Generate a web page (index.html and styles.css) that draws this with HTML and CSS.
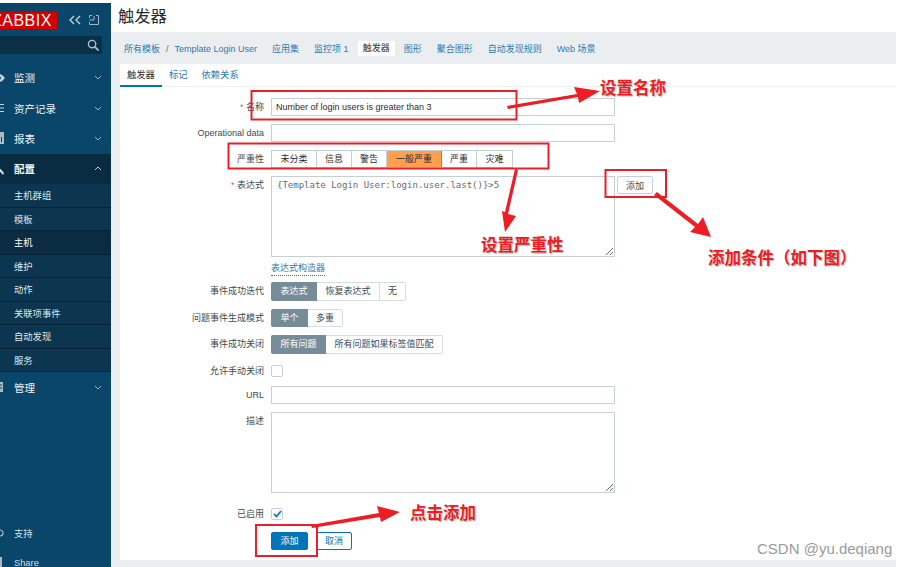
FILE: index.html
```html
<!DOCTYPE html>
<html lang="en">
<head>
  <meta charset="UTF-8">
  <meta name="viewport" content="width=device-width, initial-scale=1.0">
  <title>触发器</title>
  <link rel="stylesheet" href="styles.css">
</head>
<body>
  <div class="page">
    <aside class="sidebar">
      <div class="brand">
        <div class="logo">ZABBIX</div>
        <svg class="brand-icon" width="12" height="10" viewBox="0 0 12 10"><path d="M5 1 1 5l4 4M11 1 7 5l4 4" fill="none" stroke="#c9d6df" stroke-width="1.3"/></svg>
        <svg class="brand-icon" width="10" height="10" viewBox="0 0 10 10"><path d="M.5 3V.5H3M7 .5h2.500v9H.5V7M.5 5h4.500V1" fill="none" stroke="#9fb4c2"/></svg>
      </div>
      <div class="search">
        <svg width="12" height="12" viewBox="0 0 13 13"><circle cx="5.500" cy="5.500" r="4" fill="none" stroke="#b5c4ce" stroke-width="1.400"/><path d="m8.500 8.500 4 4" stroke="#b5c4ce" stroke-width="1.800"/></svg>
      </div>
      <nav class="menu">
        <div class="menu-item">
          <svg class="menu-icon" width="14" height="14" viewBox="0 0 14 14"><path d="M-6 7q3-4 5.500-4T5 7q-3 4-5.500 4T-6 7Z" fill="#c5d2da"/><circle cx="-.5" cy="7" r="1.500" fill="#0a466a"/></svg>
          <span>监测</span>
          <svg class="chevron" width="8" height="5" viewBox="0 0 8 5"><path d="m1 1 3 3 3-3" fill="none" stroke="#9fb4c2"/></svg>
        </div>
        <div class="menu-item">
          <svg class="menu-icon" width="14" height="14" viewBox="0 0 14 14"><path d="M0 3.500h4M0 7h4M0 10.500h4" stroke="#c5d2da" stroke-width="1.200"/></svg>
          <span>资产记录</span>
          <svg class="chevron" width="8" height="5" viewBox="0 0 8 5"><path d="m1 1 3 3 3-3" fill="none" stroke="#9fb4c2"/></svg>
        </div>
        <div class="menu-item">
          <svg class="menu-icon" width="14" height="14" viewBox="0 0 14 14"><path d="M0 1h4v12H0z" fill="#a9bbc7"/><path d="M1 6h1v5H1z" fill="#0a466a"/></svg>
          <span>报表</span>
          <svg class="chevron" width="8" height="5" viewBox="0 0 8 5"><path d="m1 1 3 3 3-3" fill="none" stroke="#9fb4c2"/></svg>
        </div>
        <div class="menu-item menu-item-open">
          <svg class="menu-icon" width="14" height="14" viewBox="0 0 14 14"><path d="m-1 5 5 6-1 2-5-6z" fill="#d5dfe5"/></svg>
          <span>配置</span>
          <svg class="chevron" width="8" height="5" viewBox="0 0 8 5"><path d="m1 4 3-3 3 3" fill="none" stroke="#c5d2da"/></svg>
        </div>
        <ul class="submenu">
          <li>主机群组</li>
          <li>模板</li>
          <li class="submenu-current">主机</li>
          <li>维护</li>
          <li>动作</li>
          <li>关联项事件</li>
          <li>自动发现</li>
          <li>服务</li>
        </ul>
        <div class="menu-item">
          <svg class="menu-icon" width="14" height="14" viewBox="0 0 14 14"><path d="M0 2h3v10H0z" fill="#a9bbc7"/><path d="M0 5h2M0 8h2" stroke="#0a466a"/></svg>
          <span>管理</span>
          <svg class="chevron" width="8" height="5" viewBox="0 0 8 5"><path d="m1 1 3 3 3-3" fill="none" stroke="#9fb4c2"/></svg>
        </div>
      </nav>
      <div class="sidebar-foot">
        <div class="foot-item">
          <svg class="menu-icon" width="14" height="14" viewBox="0 0 14 14"><circle cx="0" cy="7" r="3" fill="none" stroke="#a9bbc7" stroke-width="1.200"/></svg>
          <span>支持</span>
        </div>
        <div class="foot-item">
          <svg class="menu-icon" width="14" height="14" viewBox="0 0 14 14"><path d="M0 1h2v12H0z" fill="#a9bbc7"/></svg>
          <span>Share</span>
        </div>
      </div>
    </aside>

    <main class="main">
      <header class="header"><h1>触发器</h1></header>
      <div class="crumbs">
        <a>所有模板</a>
        <span class="crumb-sep">/</span>
        <a class="crumb-wide">Template Login User</a>
        <a>应用集</a>
        <a>监控项 <span class="count">1</span></a>
        <a class="crumb-current">触发器</a>
        <a>图形</a>
        <a>聚合图形</a>
        <a>自动发现规则</a>
        <a>Web 场景</a>
      </div>

      <section class="card">
        <div class="tabs">
          <a class="tab tab-current">触发器</a>
          <a class="tab">标记</a>
          <a class="tab">依赖关系</a>
        </div>

        <form class="form">
          <div class="row">
            <label class="label"><i>*</i> 名称</label>
            <input class="field" type="text" value="Number of login users is greater than 3">
          </div>
          <div class="row">
            <label class="label">Operational data</label>
            <input class="field" type="text">
          </div>
          <div class="row">
            <label class="label">严重性</label>
            <div class="severity">
              <span class="sev-1">未分类</span>
              <span class="sev-2">信息</span>
              <span class="sev-2">警告</span>
              <span class="sev-3 sev-on">一般严重</span>
              <span class="sev-2">严重</span>
              <span class="sev-2">灾难</span>
            </div>
          </div>
          <div class="row row-expr">
            <label class="label"><i>*</i> 表达式</label>
            <textarea class="field field-area field-mono">{Template Login User:login.user.last()}&gt;5</textarea>
            <button class="btn-plain" type="button">添加</button>
          </div>
          <div class="row row-link">
            <span class="label"></span>
            <a class="dotted">表达式构造器</a>
          </div>
          <div class="row">
            <label class="label">事件成功迭代</label>
            <div class="radio">
              <span class="radio-on w46">表达式</span><span class="w63">恢复表达式</span><span class="w26">无</span>
            </div>
          </div>
          <div class="row">
            <label class="label">问题事件生成模式</label>
            <div class="radio">
              <span class="radio-on w37">单个</span><span class="w35">多重</span>
            </div>
          </div>
          <div class="row">
            <label class="label">事件成功关闭</label>
            <div class="radio">
              <span class="radio-on w55">所有问题</span><span class="w117">所有问题如果标签值匹配</span>
            </div>
          </div>
          <div class="row row-check">
            <label class="label">允许手动关闭</label>
            <span class="check"></span>
          </div>
          <div class="row">
            <label class="label">URL</label>
            <input class="field" type="text">
          </div>
          <div class="row row-desc">
            <label class="label">描述</label>
            <textarea class="field field-area"></textarea>
          </div>
          <div class="row row-enabled">
            <label class="label">已启用</label>
            <span class="check">
              <svg width="9" height="8" viewBox="0 0 9 8"><path d="m1 4 2.500 2.500L8 1" fill="none" stroke="#0275b8" stroke-width="1.700"/></svg>
            </span>
          </div>
          <div class="row row-actions">
            <span class="label"></span>
            <button class="btn-primary" type="button">添加</button>
            <button class="btn-outline" type="button">取消</button>
          </div>
        </form>
      </section>
    </main>

    <!-- red notes drawn on top of the screenshot -->
    <svg class="marks" width="909" height="567" viewBox="0 0 909 567">
      <g fill="none" stroke="#e8202a" stroke-width="2">
        <rect x="251.500" y="91" width="265" height="28.500"/>
        <rect x="228.500" y="143.500" width="320" height="25"/>
        <rect x="605.500" y="170" width="60.500" height="27"/>
        <rect x="256" y="525" width="61" height="31"/>
      </g>
      <g fill="#ee1c25">
        <path d="M507 106 577 94 574 87 600 91 579 103 578 97 508 109Z"/>
        <path d="M515 169 518 170 508 214 516 216 505 232 502 211 505 212Z"/>
        <path d="M654 195 657 192 698 224 703 217 711 237 690 232 695 227Z"/>
        <path d="M311 525 379 513 377 506 400 512 381 522 380 517 312 528Z"/>
      </g>
    </svg>
    <div class="note note-name">设置名称</div>
    <div class="note note-severity">设置严重性</div>
    <div class="note note-cond">添加条件（如下图）</div>
    <div class="note note-submit">点击添加</div>
    <div class="watermark">CSDN @yu.deqiang</div>
  </div>
</body>
</html>
```

FILE: styles.css
```css
html, body {
  margin: 0;
  padding: 0;
  background-color: white;
}
body {
  font-family: "Liberation Sans", "Noto Sans CJK SC", sans-serif;
  font-size: 9px;
  color: #1f2c33;
}
.page {
  position: relative;
  width: 909px;
  height: 567px;
  overflow: hidden;
  box-sizing: border-box;
  padding: 3px 13px 0 0;
  display: flex;
}

/* sidebar */
.sidebar {
  width: 111px;
  flex-shrink: 0;
  background-color: #0a466a;
  color: #f2f5f7;
  font-size: 10.5px;
}
.brand {
  height: 33px;
  display: flex;
  align-items: center;
}
.logo {
  width: 57px;
  height: 17px;
  margin-top: 1px;
  background-color: #d40000;
  color: white;
  font-size: 16px;
  line-height: 17px;
  letter-spacing: .5px;
  text-indent: -8px;
  white-space: nowrap;
  overflow: hidden;
}
.brand-icon {
  margin-left: 12px;
  margin-top: 1px;
}
.brand-icon + .brand-icon {
  margin-left: 8px;
}
.search {
  width: 102px;
  height: 18px;
  box-sizing: border-box;
  display: flex;
  align-items: center;
  justify-content: flex-end;
  padding-right: 3px;
  background-color: #0a2f47;
  border-radius: 0 2px 2px 0;
}
.menu {
  margin-top: 8.500px;
}
.menu-item, .foot-item {
  height: 30.400px;
  display: flex;
  align-items: center;
}
.menu-icon {
  overflow: hidden;
  width: 14px;
  flex-shrink: 0;
}
.menu-item .chevron {
  margin-left: auto;
  margin-right: 9px;
}
.menu-item-open {
  background-color: #0a2c42;
  font-weight: bold;
}
.submenu {
  list-style: none;
  margin: 0;
  padding: 0;
  font-size: 9.300px;
}
.submenu li {
  height: 23.500px;
  box-sizing: border-box;
  padding-left: 14px;
  line-height: 24px;
  background-color: #0c3550;
  border-bottom: 1px solid #0a2235;
  color: #dfe7ec;
}
.submenu li.submenu-current {
  background-color: #0a2c42;
  color: white;
}
.sidebar-foot {
  margin-top: 116px;
  font-size: 9.300px;
  color: #d5dfe5;
}
.foot-item {
  height: 30px;
}

/* main area */
.main {
  width: 785px;
  background-color: #ebeef0;
}
.header {
  height: 29px;
  background-color: white;
  padding-left: 7px;
}
.header h1 {
  margin: 0;
  font-size: 16.300px;
  font-weight: normal;
  line-height: 27px;
  color: #1f2c33;
}
.crumbs {
  height: 32px;
  box-sizing: border-box;
  padding: 1px 0 0 13px;
  display: flex;
  align-items: center;
  font-size: 9px;
  color: #2b7ab0;
}
.crumbs a {
  margin-right: 15px;
  white-space: nowrap;
}
.crumb-sep {
  margin-left: -9px;
  margin-right: 6px;
  color: #5f6d75;
}
.count {
  color: #5f6d75;
}
.crumbs a.crumb-current {
  margin-left: -6px;
  margin-right: 9px;
  padding: 0 5px;
  height: 15px;
  line-height: 15px;
  background-color: white;
  color: #1f2c33;
}
.card {
  margin-left: 9px;
  height: 496px;
  background-color: white;
}
.tabs {
  height: 22px;
  display: flex;
  border-bottom: 1px solid #ebeef0;
}
.tab {
  height: 21px;
  padding: 0 7px;
  line-height: 22px;
  color: #2b7ab0;
  font-size: 9.300px;
  white-space: nowrap;
}
.tab-current {
  color: #1f2c33;
  border-bottom: 2px solid #0275b8;
}

/* form */
.form {
  padding-top: 11px;
}
.row {
  display: flex;
  align-items: flex-start;
  margin-bottom: 8px;
}
.label {
  width: 144px;
  flex-shrink: 0;
  margin-right: 7px;
  text-align: right;
  line-height: 18px;
  color: #3c4a52;
  white-space: nowrap;
}
.label i {
  color: #e45959;
  font-style: normal;
}
.field {
  width: 344px;
  height: 18px;
  box-sizing: border-box;
  margin: 0;
  padding: 0 4px;
  border: 1px solid #c5d0d6;
  border-radius: 0;
  outline: none;
  font-family: "Liberation Sans", "Noto Sans CJK SC", sans-serif;
  font-size: 9px;
  color: #1f2c33;
}
.field-area {
  height: 81px;
  display: block;
  padding: 3px 5px;
}
.field-mono {
  font-family: "DejaVu Sans Mono", monospace;
  font-size: 9px;
  color: #5f6b72;
}
.severity {
  display: flex;
  height: 18px;
  box-sizing: border-box;
  border: 1px solid #c5d0d6;
  line-height: 16px;
  text-align: center;
}
.severity span {
  box-sizing: border-box;
  border-right: 1px solid #c5d0d6;
}
.severity span:last-child {
  border-right: none;
}
.sev-1 { width: 45px; }
.sev-2 { width: 35px; }
.sev-3 { width: 55px; }
.severity .sev-on {
  background-color: #ff9f4f;
  border-color: #7a8c97;
}
.btn-plain {
  width: 36px;
  height: 18px;
  margin-left: 2px;
  padding: 0;
  border: 1px solid #c5d0d6;
  border-radius: 2px;
  background-color: white;
  font-family: inherit;
  font-size: 9px;
  color: #3c4a52;
}
.row-expr {
  margin-bottom: 2px;
}
.row-link {
  height: 18px;
  margin-bottom: 5px;
}
.dotted {
  height: 13px;
  line-height: 13px;
  margin-top: 3px;
  color: #2b7ab0;
  border-bottom: 1px dotted #2b7ab0;
}
.radio {
  display: flex;
  height: 18.500px;
  box-sizing: border-box;
  border: 1px solid #d5dde1;
  border-radius: 2px;
  line-height: 16.500px;
  text-align: center;
  color: #3c4a52;
}
.radio span {
  box-sizing: border-box;
  border-right: 1px solid #d5dde1;
}
.radio span:last-child {
  border-right: none;
}
.radio .radio-on {
  margin: -1px 0 -1px -1px;
  line-height: 18.500px;
  border-right: none;
  border-radius: 2px 0 0 2px;
  background-color: #768d99;
  color: white;
}
.w26 { width: 25px; }
.w35 { width: 34px; }
.w37 { width: 37px; }
.w46 { width: 46px; }
.w55 { width: 55px; }
.w63 { width: 63px; }
.w117 { width: 116px; }
.check {
  width: 12px;
  height: 12px;
  box-sizing: border-box;
  display: flex;
  align-items: center;
  justify-content: center;
  border: 1px solid #c5d0d6;
  border-radius: 2px;
  margin-top: 3px;
}
.row-check {
  margin-bottom: 6px;
}
.row-desc {
  margin-bottom: 12px;
}
.row-enabled {
  margin-bottom: 9px;
}
.btn-primary, .btn-outline {
  height: 18px;
  padding: 0;
  border-radius: 2px;
  font-family: inherit;
  font-size: 9px;
}
.btn-primary {
  width: 37px;
  border: 1px solid #0275b8;
  background-color: #0275b8;
  color: white;
}
.btn-outline {
  width: 36px;
  margin-left: 8px;
  border: 1px solid #0275b8;
  background-color: white;
  color: #0275b8;
}

/* annotations over the screenshot */
.marks {
  position: absolute;
  top: 0;
  left: 0;
}
.note {
  position: absolute;
  color: #ee1c25;
  font-weight: bold;
  font-size: 16.500px;
  line-height: 20px;
  white-space: nowrap;
  text-shadow: 1px 1px 1px #bbb;
}
.note-name { left: 600px; top: 78px; }
.note-severity { left: 481px; top: 235px; }
.note-cond { left: 708px; top: 248px; }
.note-submit { left: 410px; top: 503px; }
.watermark {
  position: absolute;
  left: 757px;
  top: 540px;
  font-size: 15px;
  line-height: 18px;
  color: #9a9a9a;
  white-space: nowrap;
}
```
